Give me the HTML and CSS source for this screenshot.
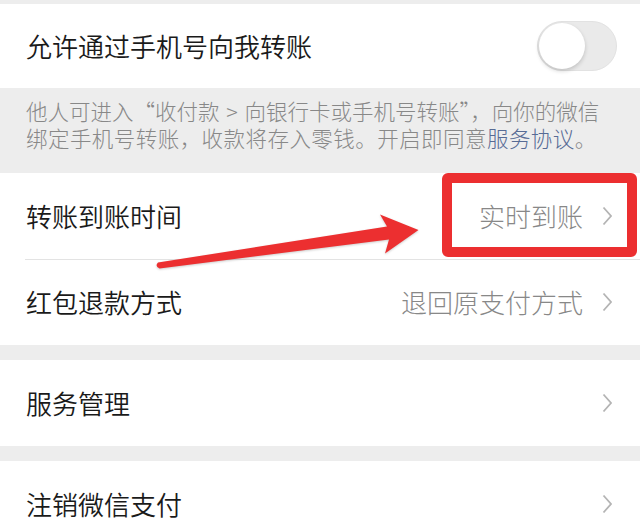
FILE: index.html
```html
<!DOCTYPE html>
<html lang="zh-CN">
<head>
  <meta charset="UTF-8">
  <meta name="viewport" content="width=device-width, initial-scale=1.0">
  <title>支付设置</title>
  <link rel="stylesheet" href="styles.css">
</head>
<body>

<div class="page">
  <div class="spacer top"></div>

  <div class="group">
    <div class="cell switch-cell">
      <span class="label">允许通过手机号向我转账</span>
      <span class="switch"><span class="knob"></span></span>
    </div>
  </div>

  <p class="tips">
    <span class="tips-line first">他人可进入“收付款 &gt; 向银行卡或手机号转账”，向你的微信</span>
    <span class="tips-line">绑定手机号转账，收款将存入零钱。开启即同意<a href="#">服务协议</a>。</span>
  </p>

  <div class="group">
    <div class="cell">
      <span class="label">转账到账时间</span>
      <span class="value">实时到账</span>
      <svg class="chevron" viewBox="0 0 10 20"><polyline points="1.5,1.5 9,10 1.5,18.5"/></svg>
    </div>
    <div class="cell">
      <span class="label">红包退款方式</span>
      <span class="value">退回原支付方式</span>
      <svg class="chevron" viewBox="0 0 10 20"><polyline points="1.5,1.5 9,10 1.5,18.5"/></svg>
    </div>
  </div>

  <div class="spacer"></div>

  <div class="group">
    <div class="cell">
      <span class="label">服务管理</span>
      <svg class="chevron" viewBox="0 0 10 20"><polyline points="1.5,1.5 9,10 1.5,18.5"/></svg>
    </div>
  </div>

  <div class="spacer"></div>

  <div class="group">
    <div class="cell">
      <span class="label">注销微信支付</span>
      <svg class="chevron" viewBox="0 0 10 20"><polyline points="1.5,1.5 9,10 1.5,18.5"/></svg>
    </div>
  </div>

  <!-- annotation layer -->
  <div class="mark-box"></div>
  <svg class="mark-arrow" viewBox="0 0 640 522">
    <path d="M158,262.5 L387,226.5 L380,214.5 L418.5,230 L385,253.5 L389,239.5 L159.5,268.5 Q154.5,266 158,262.5 Z"/>
  </svg>
</div>

</body>
</html>
```

FILE: styles.css
```css
:root {
  --bg: #ededed;
  --text: #1a1a1a;
  --sub: #888;
  --line: #e3e3e3;
  --mark: #ec2f30;
}
body {
  margin: 0;
  padding: 0;
  background: var(--bg);
  font-family: "Noto Sans CJK SC", "Noto Sans", sans-serif;
  font-weight: 300;
  color: var(--text);
  overflow: hidden;
}
.page {
  position: relative;
  width: 640px;
}
.spacer {
  height: 15px;
}
.spacer.top {
  height: 4px;
}
.group {
  background: white;
}
.cell {
  display: flex;
  align-items: center;
  height: 86px;
  padding: 0 28px 0 26px;
  position: relative;
}
.cell + .cell::before {
  content: "";
  position: absolute;
  top: 0;
  left: 25px;
  right: 0;
  border-top: 1px solid var(--line);
}
.switch-cell {
  height: 84px;
  padding-right: 23px;
}
.label {
  flex: 1;
  font-size: 26px;
  font-weight: 350;
  line-height: 1;
}
.value {
  font-size: 26px;
  line-height: 1;
  color: var(--sub);
  margin-right: 19px;
}
.chevron {
  width: 10px;
  height: 20px;
  fill: none;
  stroke: #b4b4b4;
  stroke-width: 1.8;
}
.switch {
  width: 80px;
  height: 50px;
  box-sizing: border-box;
  border-radius: 25px;
  background: #eaeaea;
  border: 1px solid #e2e2e2;
  position: relative;
}
.switch .knob {
  position: absolute;
  top: 1px;
  left: 1px;
  width: 46px;
  height: 46px;
  border-radius: 50%;
  background: white;
  box-shadow: 0 2px 4px rgba(0,0,0,0.18);
}
.tips {
  margin: 0;
  padding: 9px 0 22px 26px;
  font-size: 21.5px;
  line-height: 27px;
  color: var(--sub);
  white-space: nowrap;
}
.tips-line {
  display: block;
  height: 27px;
  letter-spacing: 0.45px;
}
.tips-line.first {
  letter-spacing: 0;
  word-spacing: 2px;
}
.tips a {
  color: #576b95;
  text-decoration: none;
}
.mark-box {
  position: absolute;
  left: 442px;
  top: 173px;
  width: 195px;
  height: 84px;
  box-sizing: border-box;
  border: 10px solid var(--mark);
  border-radius: 6px;
}
.mark-arrow {
  position: absolute;
  left: 0;
  top: 0;
  width: 640px;
  height: 522px;
  fill: var(--mark);
  filter: drop-shadow(0 1px 1px rgba(0,0,0,0.2));
}
```
